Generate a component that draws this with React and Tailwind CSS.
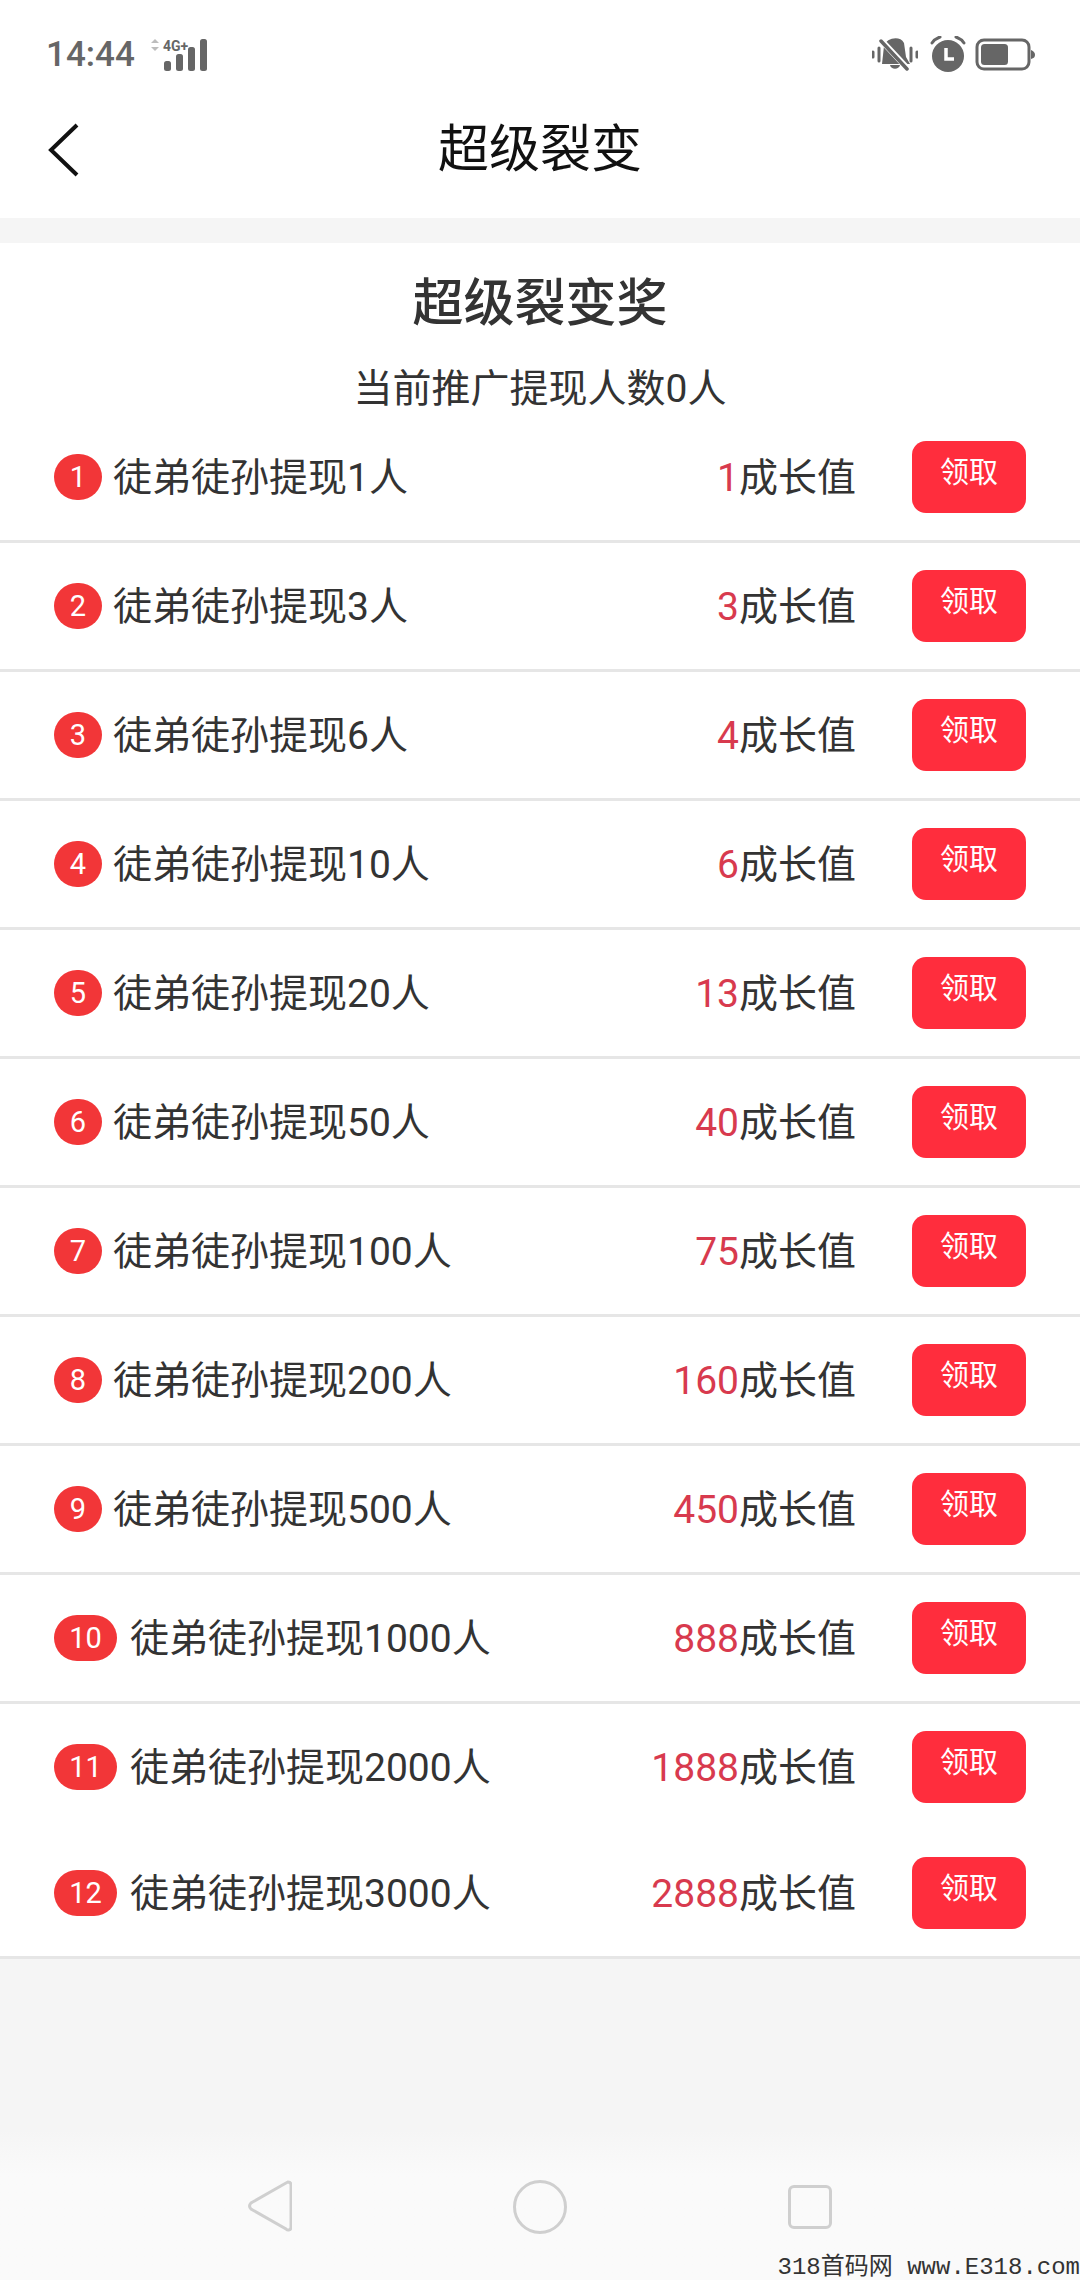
const rows = [
  [1, 1, 1], [2, 3, 3], [3, 6, 4], [4, 10, 6], [5, 20, 13], [6, 50, 40],
  [7, 100, 75], [8, 200, 160], [9, 500, 450], [10, 1000, 888], [11, 2000, 1888], [12, 3000, 2888],
];

function Row({ n, people, value }) {
  const wide = n >= 10;
  return (
    <div className={`flex items-center pl-[54px] pr-[54px] ${n === 11 ? "h-[126px]" : "h-[129px] border-b-[3px] border-[#e6e6e6]"}`}>
      <span className={`flex items-center justify-center h-[46px] rounded-[23px] bg-[#f23638] text-white text-[29px] leading-none ${wide ? "w-[63px] mr-[13px]" : "w-[48px] mr-[11px]"}`}>
        {n}
      </span>
      <span className="mt-[2px] text-[39px] leading-none text-[#333333]">徒弟徒孙提现{people}人</span>
      <span className="mt-[2px] ml-auto text-[39px] leading-none text-[#333333]">
        <span className="text-[#d83a4e]">{value}</span>成长值
      </span>
      <button className="ml-[56px] flex justify-center w-[114px] h-[72px] pt-[17px] rounded-[14px] bg-[#ff2d3d] text-white text-[29px] leading-[30px]">
        领取
      </button>
    </div>
  );
}

export default function App() {
  return (
    <div className="relative flex flex-col w-[1080px] h-[2280px] overflow-hidden bg-[#f5f5f5] font-['Roboto','Noto_Sans_CJK_SC',sans-serif]">
      <div className="bg-white">
        <div className="flex items-center justify-between h-[108px] pl-[46px] pr-[45px] text-[#666666]">
          <div className="flex items-center">
            <span className="text-[35px] leading-none font-medium">14:44</span>
            <svg className="ml-[12px]" width="60" height="34" viewBox="0 0 60 34">
              <path d="M4 6 L8 2 L12 6Z M4 10 L8 14 L12 10Z" fill="#bdbdbd" />
              <rect x="17" y="24" width="7" height="10" rx="2.5" fill="#666" />
              <rect x="29" y="17" width="7" height="17" rx="2.5" fill="#666" />
              <rect x="41" y="10" width="7" height="24" rx="2.5" fill="#666" />
              <rect x="53" y="2" width="7" height="32" rx="2.5" fill="#666" />
              <text x="16" y="14" fontSize="14" fontWeight="700" fill="#666" fontFamily="Roboto">4G+</text>
            </svg>
          </div>
          <div className="flex items-center">
            <svg width="46" height="34" viewBox="0 0 46 34">
              <path d="M12 9 C14 1 28 -2 32 6 L34 20 L38 27 L10 27 Z" fill="#666" />
              <path d="M18 28 H28 C27 33 19 33 18 28Z" fill="#666" />
              <path d="M8 2 L37 33" stroke="#fff" strokeWidth="6" />
              <path d="M9 4 L35 32" stroke="#666" strokeWidth="3.5" strokeLinecap="round" />
              <path d="M1 15V20M7 11V24M39 11V24M45 15V20" stroke="#666" strokeWidth="3" strokeLinecap="round" />
            </svg>
            <svg className="ml-[12px]" width="36" height="36" viewBox="0 0 36 36">
              <circle cx="18" cy="20" r="16" fill="#666" />
              <path d="M2 7 C4 4 7 2 10 1 M26 1 C29 2 32 4 34 7" stroke="#666" strokeWidth="3" fill="none" strokeLinecap="round" />
              <path d="M16 12 V23 H24" stroke="#fff" strokeWidth="3.5" fill="none" />
            </svg>
            <svg className="ml-[9px]" width="60" height="33" viewBox="0 0 60 33">
              <rect x="2" y="2" width="52" height="29" rx="7" fill="none" stroke="#666" strokeWidth="3" />
              <rect x="6" y="6" width="27" height="21" rx="3.5" fill="#666" />
              <path d="M56 12 C59 13 60 15 60 17 C60 19 59 20 56 21Z" fill="#666" />
            </svg>
          </div>
        </div>
        <div className="relative flex items-center justify-center h-[110px]">
          <svg className="absolute left-[47px] top-[15px]" width="34" height="54" viewBox="0 0 34 54">
            <path d="M30 2 L4 27 L30 52" fill="none" stroke="#111" strokeWidth="4" />
          </svg>
          <span className="text-[51px] leading-none text-[#111111] -mt-[28px]">超级裂变</span>
        </div>
      </div>

      <div className="mt-[25px] bg-white">
        <div className="pt-[35px] text-center text-[51px] leading-[52px] font-medium text-[#333333]">超级裂变奖</div>
        <div className="pt-[39px] pb-[5px] text-center text-[39px] leading-[40px] text-[#333333]">当前推广提现人数0人</div>
        {rows.map(([n, people, value]) => (
          <Row key={n} n={n} people={people} value={value} />
        ))}
      </div>

      <div className="flex-1" />

      <div className="flex items-start h-[150px] pt-[50px] pl-[248px] bg-gradient-to-b from-[#f5f5f5] to-[#fafafa] to-30%">
        <svg width="44" height="52" viewBox="0 0 44 52">
          <path d="M40 2 C42 2 43 3 43 5 V47 C43 50 40 51 38 49 L3 29 C1 27 1 25 3 23 L38 3Z" fill="none" stroke="#cfcfcf" strokeWidth="3" />
        </svg>
        <svg className="ml-[221px]" width="54" height="54" viewBox="0 0 54 54">
          <circle cx="27" cy="27" r="25.5" fill="none" stroke="#cfcfcf" strokeWidth="3" />
        </svg>
        <div className="ml-[221px] mt-[5px] w-[44px] h-[44px] rounded-[6px] border-[3px] border-[#cfcfcf]" />
      </div>

      <div className="absolute right-0 bottom-0 text-[24px] leading-[24px] text-[#333333] whitespace-nowrap font-['Liberation_Mono','Noto_Sans_CJK_SC',monospace]">
        318首码网 www.E318.com
      </div>
    </div>
  );
}
